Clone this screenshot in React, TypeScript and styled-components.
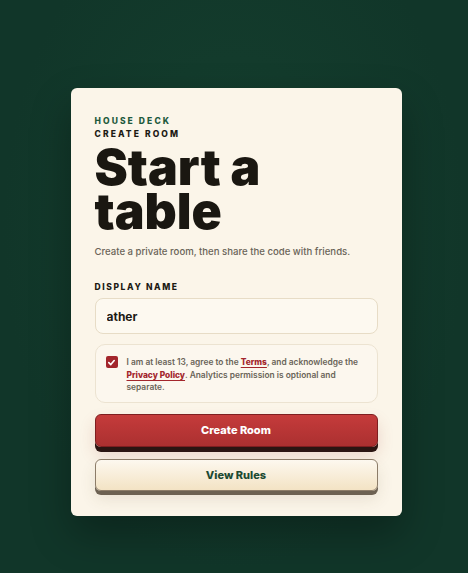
import React, { useState } from 'react';
import styled, { createGlobalStyle } from 'styled-components';

const GlobalStyle = createGlobalStyle`
  * { box-sizing: border-box; }
  html, body { margin: 0; padding: 0; }
  body {
    background: #123a2d;
    font-family: Inter, "Noto Sans", sans-serif;
  }
`;

const Page = styled.div`
  min-height: 573px;
  display: flex;
  justify-content: center;
  align-items: flex-start;
  padding: 88px 0 0 4px;
  background: radial-gradient(ellipse at 50% 40%, #15402f 0%, #113629 70%);
`;

const Card = styled.div`
  width: 331px;
  background: #fbf5e9;
  border-radius: 6px;
  padding: 27px 24px 25px;
  box-shadow: 0 18px 40px rgba(0, 0, 0, 0.3);
  display: flex;
  flex-direction: column;
`;

const Kicker = styled.div<{ tone: 'green' | 'dark' }>`
  font-size: 8.5px;
  font-weight: 800;
  letter-spacing: 2.1px;
  line-height: 13px;
  color: ${p => (p.tone === 'green' ? '#1e5a3d' : '#1d1a14')};
`;

const Title = styled.h1`
  margin: 4px 0 0;
  font-size: 50px;
  font-weight: 900;
  line-height: 44px;
  letter-spacing: 0;
  color: #1a1711;
`;

const Subtitle = styled.p`
  margin: 13px 0 0;
  font-size: 9.6px;
  font-weight: 500;
  color: #6a6458;
`;

const Label = styled.label`
  margin-top: 25px;
  font-size: 8.5px;
  font-weight: 800;
  letter-spacing: 1.6px;
  color: #1d1a14;
`;

const Input = styled.input`
  margin-top: 6px;
  height: 36px;
  width: 100%;
  border: 1px solid #e7dcc6;
  border-radius: 8px;
  background: #fdf9f0;
  padding: 0 11px;
  font-family: inherit;
  font-size: 12px;
  font-weight: 700;
  color: #1d1a14;
  outline: none;
`;

const Consent = styled.div`
  margin-top: 10px;
  border: 1px solid #ece3d1;
  border-radius: 10px;
  background: #fcf7ee;
  padding: 11px 12px 8px 10px;
  display: flex;
  gap: 9px;
  align-items: flex-start;
`;

const Check = styled.span`
  flex: 0 0 12px;
  width: 12px;
  height: 12px;
  border-radius: 2px;
  background: #a3262c;
  display: flex;
  align-items: center;
  justify-content: center;
`;

const ConsentText = styled.p`
  margin: 0;
  font-size: 8.4px;
  font-weight: 600;
  line-height: 12.6px;
  color: #6a6458;
`;

const Link = styled.a`
  color: #a3262c;
  font-weight: 800;
  text-decoration: underline;
  text-underline-offset: 1.5px;
`;

const Button = styled.button<{ variant: 'primary' | 'secondary' }>`
  height: 33px;
  width: 100%;
  border-radius: 6px;
  font-family: inherit;
  font-size: 11px;
  font-weight: 800;
  cursor: pointer;
  ${p =>
    p.variant === 'primary'
      ? `
    margin-top: 11px;
    color: #fff;
    border: 1px solid #7e1e20;
    background: linear-gradient(180deg, #c53b3b 0%, #ab3030 100%);
    box-shadow: 0 5px 0 #2b1512, 0 8px 16px rgba(160, 60, 50, 0.18);
  `
      : `
    margin-top: 12px;
    height: 32px;
    color: #1d4a33;
    border: 1px solid #8c7c68;
    background: linear-gradient(180deg, #fdf8ef 0%, #f3e3c4 100%);
    box-shadow: 0 4px 0 #6c6152, 0 8px 16px rgba(90, 70, 40, 0.12);
  `}
`;

export default function App() {
  const [name, setName] = useState('ather');
  return (
    <>
      <GlobalStyle />
      <Page>
        <Card>
          <Kicker tone="green">HOUSE DECK</Kicker>
          <Kicker tone="dark">CREATE ROOM</Kicker>
          <Title>
            Start a<br />table
          </Title>
          <Subtitle>Create a private room, then share the code with friends.</Subtitle>
          <Label htmlFor="display-name">DISPLAY NAME</Label>
          <Input id="display-name" value={name} onChange={e => setName(e.target.value)} />
          <Consent>
            <Check>
              <svg width="9" height="9" viewBox="0 0 10 10">
                <path d="M2 5.2 L4.2 7.3 L8 2.8" fill="none" stroke="#fff" strokeWidth="1.8" strokeLinecap="round" strokeLinejoin="round" />
              </svg>
            </Check>
            <ConsentText>
              I am at least 13, agree to the <Link href="#">Terms</Link>, and acknowledge the{' '}
              <Link href="#">Privacy Policy</Link>. Analytics permission is optional and separate.
            </ConsentText>
          </Consent>
          <Button variant="primary">Create Room</Button>
          <Button variant="secondary">View Rules</Button>
        </Card>
      </Page>
    </>
  );
}
